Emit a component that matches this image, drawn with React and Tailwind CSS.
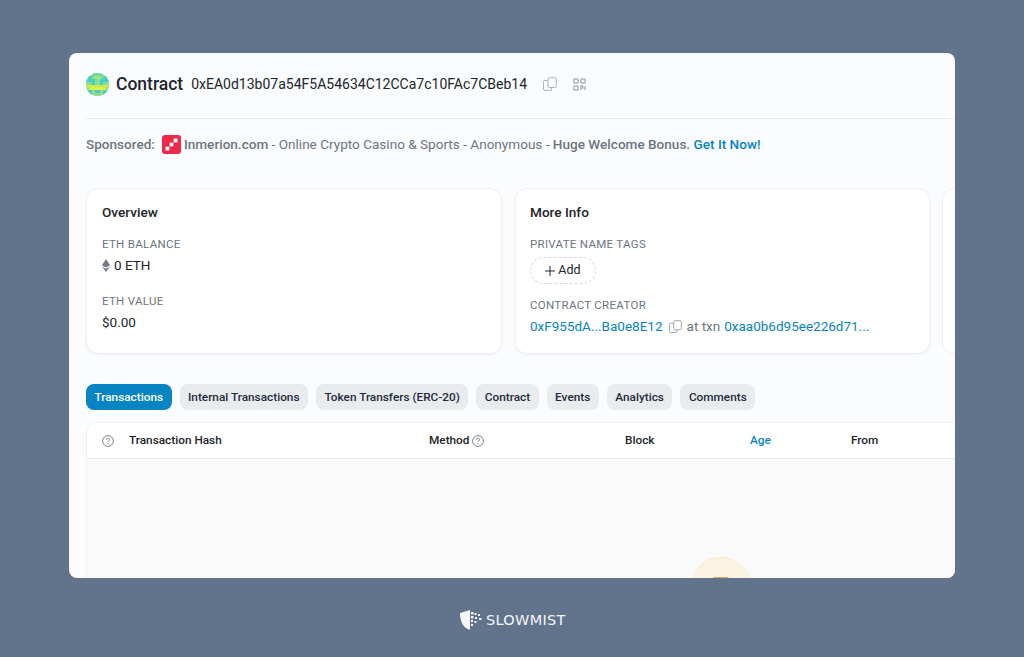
import React from "react";

const tabs = [
  "Transactions",
  "Internal Transactions",
  "Token Transfers (ERC-20)",
  "Contract",
  "Events",
  "Analytics",
  "Comments",
];

function CopyIcon({ className }) {
  return (
    <svg viewBox="0 0 14 14" fill="none" stroke="currentColor" strokeWidth="1" className={className}>
      <path d="M4.5 3.5H2a1.5 1.5 0 0 0-1.5 1.5v7A1.5 1.5 0 0 0 2 13.500h5A1.500 1.500 0 0 0 8.500 12v-1.500" />
      <rect x="5" y="0.700" width="8.300" height="9.800" rx="1.600" />
    </svg>
  );
}

function QrIcon({ className }) {
  return (
    <svg viewBox="0 0 14 14" fill="none" stroke="currentColor" strokeWidth="1.600" className={className}>
      <rect x="1" y="1" width="4.500" height="4.500" rx="1" />
      <rect x="8.500" y="1" width="4.500" height="4.500" rx="1" />
      <rect x="1" y="8.500" width="4.500" height="4.500" rx="1" />
      <path d="M8.500 13V8.500h2v3M13 8.500V13" />
    </svg>
  );
}

function HelpIcon() {
  return (
    <svg viewBox="0 0 12 12" fill="none" className="h-3 w-3 text-[#6c757e]">
      <circle cx="6" cy="6" r="5.400" stroke="currentColor" strokeWidth="0.900" />
      <path d="M4.500 4.700a1.500 1.500 0 1 1 2.200 1.300c-.5.300-.7.500-.7 1" stroke="currentColor" strokeWidth="0.900" />
      <circle cx="6" cy="8.600" r="0.550" fill="currentColor" />
    </svg>
  );
}

// pixel avatar of the contract
function Avatar() {
  return (
    <svg viewBox="0 0 8 8" className="h-[23px] w-[23px] rounded-full" shapeRendering="crispEdges">
      <rect width="8" height="8" fill="#8fdc8c" />
      <rect x="2" y="0" width="4" height="1" fill="#6fd6a0" />
      <rect x="0" y="1" width="2" height="2" fill="#45d0c4" />
      <rect x="6" y="1" width="2" height="2" fill="#45d0c4" />
      <rect x="3" y="1" width="2" height="1" fill="#a8e37a" />
      <rect x="2" y="2" width="1" height="2" fill="#3fcfd0" />
      <rect x="5" y="2" width="1" height="2" fill="#3fcfd0" />
      <rect x="0" y="4" width="8" height="1" fill="#c9ec55" />
      <rect x="1" y="5" width="6" height="1" fill="#dff044" />
      <rect x="0" y="6" width="2" height="2" fill="#45cfc6" />
      <rect x="6" y="6" width="2" height="2" fill="#45cfc6" />
      <rect x="3" y="6" width="2" height="1" fill="#45cfc6" />
    </svg>
  );
}

function SponsorLogo() {
  return (
    <span className="ml-[7px] mr-[3px] flex h-[19px] w-[19px] items-center justify-center rounded-[3px] bg-[#ee2a4a]">
      <svg viewBox="0 0 12 12" className="h-[13px] w-[13px]" fill="#fff">
        <rect x="0.500" y="8" width="3.500" height="3.500" />
        <rect x="4.250" y="4.250" width="3.500" height="3.500" />
        <rect x="8" y="0.500" width="3.500" height="3.500" />
      </svg>
    </span>
  );
}

function EthIcon() {
  return (
    <svg viewBox="0 0 8 13" className="mr-[4px] h-[13px] w-2" fill="#6f7a86">
      <path d="M4 0 8 6.300 4 8.500 0 6.300z" />
      <path d="M0 7.400 4 9.700 8 7.400 4 13z" />
    </svg>
  );
}

function ShieldLogo() {
  return (
    <svg viewBox="0 0 24 22" className="h-[22px] w-6">
      <path d="M1 4 11 1v20C5 19 1 14 1 4z" fill="#f4f6f8" />
      <g fill="#f4f6f8">
        <rect x="12" y="3" width="2.500" height="2.500" />
        <rect x="15.500" y="4" width="2" height="2" />
        <rect x="19" y="5" width="2" height="2" />
        <rect x="12" y="7" width="2.500" height="2.500" />
        <rect x="16" y="8" width="2" height="2" />
        <rect x="20" y="9" width="2.500" height="2" />
        <rect x="12" y="11" width="2" height="2" />
        <rect x="15.500" y="12" width="2" height="2" />
        <rect x="12" y="15" width="2" height="2" />
      </g>
    </svg>
  );
}

export default function App() {
  return (
    <div
      className="flex h-[657px] w-[1024px] flex-col overflow-hidden bg-[#62738c] pl-[69px] pt-[53px]"
      style={{ fontFamily: "Roboto, sans-serif" }}
    >
      <div className="h-[525px] w-[886px] overflow-hidden rounded-lg bg-[#fbfcfe] pl-[17px]">
        {/* Header */}
        <div className="flex h-[66px] items-center border-b border-[#e9ecef] pb-[3px]">
          <Avatar />
          <h1 className="ml-[7px] text-[17.500px] font-medium text-[#212529]">Contract</h1>
          <span className="ml-2 pt-[1px] text-[14px] text-[#212529]">
            0xEA0d13b07a54F5A54634C12CCa7c10FAc7CBeb14
          </span>
          <CopyIcon className="ml-4 h-[14px] w-[14px] text-[#aab2ba]" />
          <QrIcon className="ml-[16px] h-[13px] w-[13px] text-[#aab2ba]" />
        </div>

        {/* Sponsored */}
        <p className="mt-[16px] flex h-[18px] items-center whitespace-pre text-[13.570px] text-[#6c757e]">
          <span className="font-medium">Sponsored:</span>
          <SponsorLogo />
          <span className="font-medium">Inmerion.com</span>
          <span> - Online Crypto Casino &amp; Sports - Anonymous - </span>
          <span className="font-medium">Huge Welcome Bonus. </span>
          <span className="font-medium text-[#0784c3]">Get It Now!</span>
        </p>

        {/* Cards */}
        <div className="mt-[35px] flex">
          <section className="h-[166px] w-[416px] shrink-0 rounded-xl border border-[#eef0f3] bg-white px-[15px] pt-[15px] shadow-sm shadow-[#f0f2f5]">
            <h2 className="text-[13.600px] font-medium leading-[17px] text-[#212529]">Overview</h2>
            <p className="mt-[16px] text-[11.500px] leading-[14px] tracking-[0.3px] text-[#6c757e]">ETH BALANCE</p>
            <p className="mt-[5px] flex items-center text-[13.500px] leading-[18px] text-[#212529]">
              <EthIcon />0 ETH
            </p>
            <p className="mt-[20px] text-[11.500px] leading-[14px] tracking-[0.3px] text-[#6c757e]">ETH VALUE</p>
            <p className="mt-[5px] text-[13.500px] leading-[18px] text-[#212529]">$0.00</p>
          </section>

          <section className="ml-[13px] h-[166px] w-[415px] shrink-0 rounded-xl border border-[#eef0f3] bg-white px-[14px] pt-[15px] shadow-sm shadow-[#f0f2f5]">
            <h2 className="text-[13.600px] font-medium leading-[17px] text-[#212529]">More Info</h2>
            <p className="mt-[16px] text-[11.500px] leading-[14px] tracking-[0.3px] text-[#6c757e]">PRIVATE NAME TAGS</p>
            <button className="mt-[6px] flex h-[27px] w-[66px] items-center justify-center gap-[3px] rounded-full border border-dashed border-[#d5d9dd] text-[12.500px] text-[#212529]">
              <svg viewBox="0 0 10 10" className="h-[10px] w-[10px]" stroke="currentColor" strokeWidth="1">
                <path d="M5 0v10M0 5h10" />
              </svg>
              Add
            </button>
            <p className="mt-[14px] text-[11.500px] leading-[14px] tracking-[0.3px] text-[#6c757e]">CONTRACT CREATOR</p>
            <p className="mt-[5px] flex items-center text-[13.500px] leading-[18px] text-[#6c757e]">
              <span className="text-[#0784c3]">0xF955dA...Ba0e8E12</span>
              <CopyIcon className="ml-[6px] mr-[5px] h-[13px] w-[13px] text-[#9aa3ab]" />
              <span>at txn</span>
              <span className="ml-[4px] text-[#0784c3]">0xaa0b6d95ee226d71...</span>
            </p>
          </section>

          <section className="ml-[12px] h-[166px] w-[415px] shrink-0 rounded-xl border border-[#eef0f3] bg-white" />
        </div>

        {/* Tabs */}
        <div className="mt-[30px] flex gap-2">
          {tabs.map((tab, i) => (
            <span
              key={tab}
              className={`flex h-[26px] items-center rounded-lg px-[8.500px] pt-[1px] text-[11.800px] font-medium ${
                i === 0 ? "bg-[#0784c3] text-white" : "bg-[#e9ecef] text-[#1f2a3a]"
              }`}
            >
              {tab}
            </span>
          ))}
        </div>

        {/* Table runs past the right edge of the window */}
        <div className="mt-[12px] h-[200px] w-[900px] overflow-hidden rounded-t-xl border border-b-0 border-r-0 border-[#eef0f3] bg-[#fafafa]">
          <div className="flex h-[36px] items-center border-b border-[#e9ecef] bg-white pt-[1px] text-[11.800px] font-medium text-[#212529]">
            <span className="ml-[15px] mr-[15px]"><HelpIcon /></span>
            <span className="w-[300px]">Transaction Hash</span>
            <span className="flex w-[196px] items-center gap-[3px]">Method <HelpIcon /></span>
            <span className="w-[125px]">Block</span>
            <span className="w-[101px] text-[#0784c3]">Age</span>
            <span>From</span>
          </div>
          <div className="ml-[604px] mt-[98px] flex h-[60px] w-[60px] items-start justify-center rounded-full border border-[#f8edd0] bg-[#fbf4e3] pt-[19px]">
            <div className="h-[12px] w-[16px] rounded-[2px] border-2 border-[#d9ae4c]" />
          </div>
        </div>
      </div>

      {/* Footer logo */}
      <div className="ml-[390px] mt-[31px] flex items-center gap-[3px] text-white">
        <ShieldLogo />
        <span className="text-[14.500px] leading-[18px] tracking-[0.300px] text-[#f4f6f8]" style={{ fontFamily: "'DejaVu Sans', sans-serif" }}>
          SLOWMIST
        </span>
      </div>
    </div>
  );
}
